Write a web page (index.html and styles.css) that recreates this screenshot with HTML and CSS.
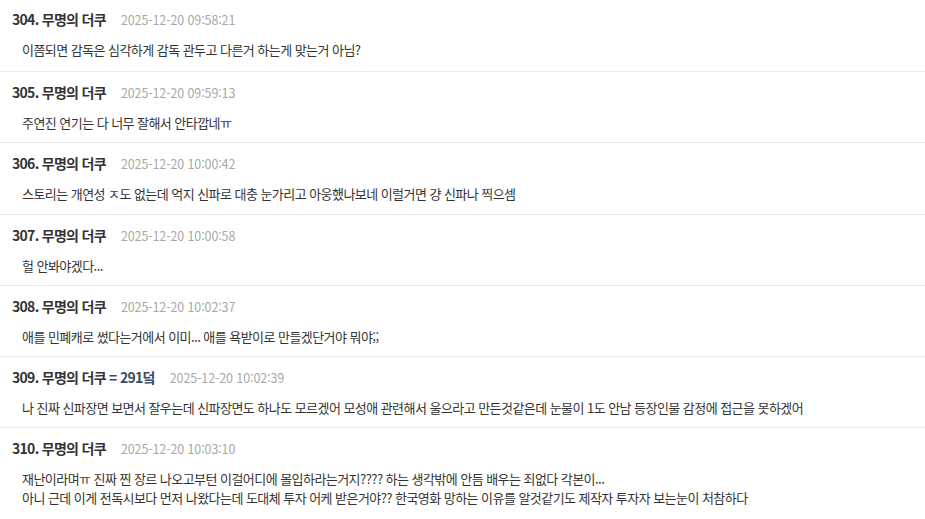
FILE: index.html
```html
<!DOCTYPE html>
<html lang="ko">
<head>
<meta charset="utf-8">
<link rel="stylesheet" href="styles.css">
</head>
<body>
<ul class="comments">
  <li class="comment">
    <div class="meta"><span class="name">304. 무명의 더쿠</span><span class="date">2025-12-20 09:58:21</span></div>
    <div class="text">이쯤되면 감독은 심각하게 감독 관두고 다른거 하는게 맞는거 아님?</div>
  </li>
  <li class="comment">
    <div class="meta"><span class="name">305. 무명의 더쿠</span><span class="date">2025-12-20 09:59:13</span></div>
    <div class="text">주연진 연기는 다 너무 잘해서 안타깝네ㅠ</div>
  </li>
  <li class="comment">
    <div class="meta"><span class="name">306. 무명의 더쿠</span><span class="date">2025-12-20 10:00:42</span></div>
    <div class="text">스토리는 개연성 ㅈ도 없는데 억지 신파로 대충 눈가리고 아웅했나보네 이럴거면 걍 신파나 찍으셈</div>
  </li>
  <li class="comment">
    <div class="meta"><span class="name">307. 무명의 더쿠</span><span class="date">2025-12-20 10:00:58</span></div>
    <div class="text">헐 안봐야겠다...</div>
  </li>
  <li class="comment">
    <div class="meta"><span class="name">308. 무명의 더쿠</span><span class="date">2025-12-20 10:02:37</span></div>
    <div class="text">애를 민폐캐로 썼다는거에서 이미... 애를 욕받이로 만들겠단거야 뭐야;;</div>
  </li>
  <li class="comment">
    <div class="meta"><span class="name">309. 무명의 더쿠 <span class="ref">= 291덬</span></span><span class="date">2025-12-20 10:02:39</span></div>
    <div class="text">나 진짜 신파장면 보면서 잘우는데 신파장면도 하나도 모르겠어 모성애 관련해서 울으라고 만든것같은데 눈물이 1도 안남 등장인물 감정에 접근을 못하겠어</div>
  </li>
  <li class="comment">
    <div class="meta"><span class="name">310. 무명의 더쿠</span><span class="date">2025-12-20 10:03:10</span></div>
    <div class="text">재난이라며ㅠ 진짜 찐 장르 나오고부턴 이걸어디에 몰입하라는거지???? 하는 생각밖에 안듬 배우는 죄없다 각본이...<br>아니 근데 이게 전독시보다 먼저 나왔다는데 도대체 투자 어케 받은거야?? 한국영화 망하는 이유를 알것같기도 제작자 투자자 보는눈이 처참하다</div>
  </li>
</ul>
</body>
</html>
```

FILE: styles.css
```css
html, body {
  margin: 0;
  padding: 0;
  background: #ffffff;
}
body {
  font-family: "Noto Sans CJK KR", "Noto Sans", sans-serif;
  color: #333333;
}
.comments {
  list-style: none;
  margin: 0;
  padding: 0;
  width: 925px;
}
.comment {
  padding: 10px 12px 10.3px 12px;
  border-bottom: 1px solid #ececec;
}
.comment:first-child {
  padding-top: 9px;
  padding-bottom: 12px;
}
.comment:last-child {
  border-bottom: none;
}
.meta {
  display: flex;
  align-items: baseline;
  gap: 15px;
  height: 20px;
  line-height: 20px;
}
.name {
  font-size: 14px;
  font-weight: 700;
  color: #333333;
  letter-spacing: -0.7px;
}
.ref {
  color: #3c4a6a;
}
.date {
  font-size: 12.5px;
  color: #a8a8a8;
  letter-spacing: -0.1px;
}
.text {
  margin-top: 11px;
  padding-left: 10px;
  font-size: 13px;
  line-height: 19px;
  color: #333333;
  letter-spacing: -0.55px;
}
```
